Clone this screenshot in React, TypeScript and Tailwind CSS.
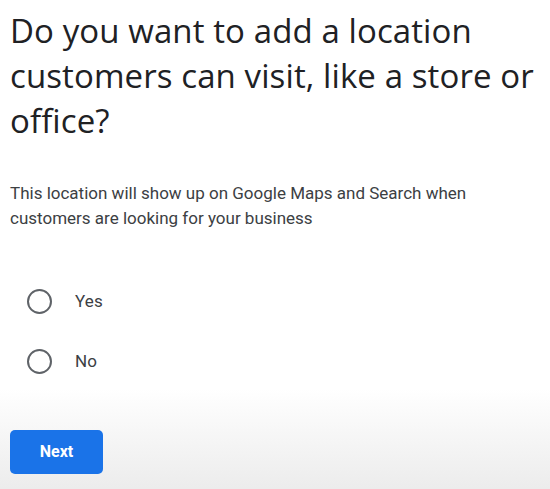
import { useState } from "react";

const options = ["Yes", "No"];

export default function App() {
  const [choice, setChoice] = useState<string | null>(null);

  return (
    <div className="w-[550px] h-[489px] flex flex-col bg-white font-['Roboto',sans-serif]">
      <div className="px-[10px] pt-[8px]">
        <h1 className="font-['Open_Sans',sans-serif] text-[33px] leading-[45px] text-[#202124] tracking-[0.1px]">
          Do you want to add a location customers can visit, like a store or office?
        </h1>
        <p className="mt-[38px] text-[17px] leading-[25px] text-[#3c4043]">
          This location will show up on Google Maps and Search when customers are looking for your business
        </p>
        <div className="mt-[58px] flex flex-col gap-[34px] pl-[17px]">
          {options.map((opt) => (
            <label key={opt} className="flex items-center gap-[23px] cursor-pointer">
              <span className="w-[25px] h-[25px] rounded-full border-2 border-[#5f6368] flex items-center justify-center">
                {choice === opt && <span className="w-[12px] h-[12px] rounded-full bg-[#1a73e8]" />}
              </span>
              <input
                type="radio"
                name="visit"
                className="hidden"
                checked={choice === opt}
                onChange={() => setChoice(opt)}
              />
              <span className="text-[17px] tracking-[0.2px] text-[#3c4043]">{opt}</span>
            </label>
          ))}
        </div>
      </div>
      <div className="mt-auto h-[100px] flex items-end px-[10px] pb-[15px] bg-gradient-to-b from-white to-[#ececec]">
        <button className="w-[93px] h-[44px] rounded-[5px] bg-[#1a73e8] text-white font-bold text-[16px]">
          Next
        </button>
      </div>
    </div>
  );
}
